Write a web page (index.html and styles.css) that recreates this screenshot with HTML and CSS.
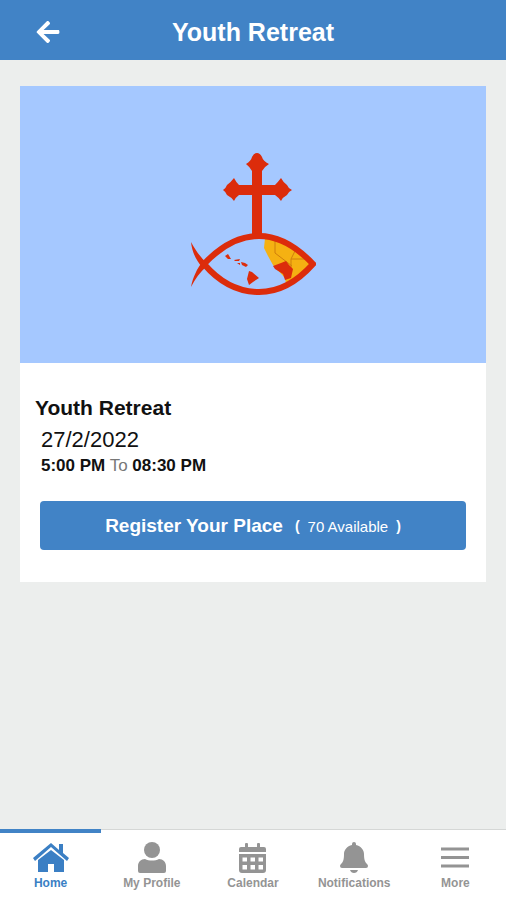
FILE: index.html
```
<!DOCTYPE html>
<html lang="en">
<head>
  <meta charset="UTF-8" />
  <meta name="viewport" content="width=device-width, initial-scale=1" />
  <title>Youth Retreat</title>
  <link rel="stylesheet" href="styles.css">
</head>
<body>
  <header class="topbar">
    <button class="back" type="button" aria-label="Back">
      <svg viewBox="0 0 448 512" width="24" height="26" fill="currentColor">
        <path d="M257.500 445.100l-22.200 22.200c-9.400 9.400-24.600 9.400-33.900 0L7 273c-9.400-9.400-9.400-24.600 0-33.900L201.400 44.700c9.400-9.400 24.600-9.400 33.900 0l22.200 22.200c9.500 9.500 9.300 25-.4 34.300L136.600 216H424c13.300 0 24 10.700 24 24v32c0 13.300-10.700 24-24 24H136.600l120.500 114.800c9.800 9.300 10 24.800.4 34.300z"/>
      </svg>
    </button>
    <h1>Youth Retreat</h1>
  </header>

  <main>
    <article class="card">
      <div class="cover">
        <!-- cross and fish logo -->
        <svg viewBox="190 153 126 144" width="126" height="144">
          <g fill="#f5b112">
            <path d="M265 238C285 241 300 251 312 264C303 274 295 281 286 284L285 278L273 265L268 256L264 248Z"/>
            <path d="M275 240V253L292 266M297 247L291 259V268M291 259H310" fill="none" stroke="#cf7f0c" stroke-width="1"/>
          </g>
          <g fill="#dc2c0b">
            <path d="M273 266L281 263L286 261L289 265L293 269L291 278L285 280L283 274L275 269Z"/>
            <path d="M225 256L228 254L231 259L228 259ZM234 260L240 259L239 261L235 261ZM237 263L240 263L240 265ZM241 262L245 263L248 265L246 267L242 265ZM249 271L252 272L259 278L253 282L249 285L247 279Z"/>
            <path d="M252 235V195H239Q236 197 234 201Q231 197 227 195Q226 192 223 190Q226 188 227 185Q231 182 234 178Q236 182 239 185H252V171Q250 167 246 164Q251 161 252 157Q254 153 257 153Q260 153 262 157Q263 161 269 164Q264 167 262 171V185H275Q278 182 281 178Q283 182 287 185Q288 188 292 190Q288 192 287 195Q283 197 281 201Q278 197 275 195H262V235Z"/>
            <path d="M191 242C196 251 201 258 207 263L202 267C196 260 192 252 191 242ZM191 287C193 277 197 269 202 262L207 266C200 272 195 279 191 287Z"/>
          </g>
          <path d="M204 264C222 245 240 236 259 236C278 236 296 246 313 264C297 282 278 292 259 292C240 292 221 284 204 264Z" fill="none" stroke="#dc2c0b" stroke-width="6"/>
        </svg>
      </div>
      <div class="details">
        <h2>Youth Retreat</h2>
        <p class="date">27/2/2022</p>
        <p class="time"><b>5:00 PM</b> To <b>08:30 PM</b></p>
        <button class="register" type="button">
          <span class="label">Register Your Place</span>
          <span class="places"><b>(</b><span>70 Available</span><b>)</b></span>
        </button>
      </div>
    </article>
  </main>

  <nav class="tabs">
    <a class="tab active" href="#home">
      <svg viewBox="0 0 36 32" width="36" height="32" fill="currentColor">
        <path d="M18 1L26 8V2H30V11L36 16L34 19L18 5L2 19L0 16Z"/>
        <path d="M18 8L31 18V30H21V22H15V30H5V18Z"/>
      </svg>
      Home
    </a>
    <a class="tab" href="#profile">
      <svg viewBox="0 0 36 32" width="36" height="32" fill="currentColor">
        <circle cx="18" cy="8" r="8"/>
        <path d="M11 17C15 19 21 19 25 17C29 17 32 20 32 24V29Q32 31 30 31H6Q4 31 4 29V24C4 20 7 17 11 17Z"/>
      </svg>
      My Profile
    </a>
    <a class="tab" href="#calendar">
      <svg viewBox="0 0 36 32" width="36" height="32" fill="currentColor">
        <path d="M10 2Q10 1 11 1H12Q13 1 13 2V5H22V2Q22 1 23 1H24Q25 1 25 2V5H29Q31 5 31 7V10H4V7Q4 5 6 5H10Z"/>
        <path fill-rule="evenodd" d="M4 12H31V28Q31 31 28 31H7Q4 31 4 28ZM7.500 15.500V19.500H12V15.500ZM15.500 15.500V19.500H20V15.500ZM23.500 15.500V19.500H28V15.500ZM7.500 23V27.500H12V23ZM15.500 23V27.500H20V23ZM23.500 23V27.500H28V23Z"/>
      </svg>
      Calendar
    </a>
    <a class="tab" href="#notifications">
      <svg viewBox="0 0 36 32" width="36" height="32" fill="currentColor">
        <path d="M16 2Q16 0 18 0Q20 0 20 2V3C25 4 28 8 28 12C28 18 29 20 31 22Q32 23 32 24Q32 26 30 26H6Q4 26 4 24Q4 23 5 22C7 20 8 18 8 12C8 8 11 4 16 3Z"/>
        <path d="M14 28H22Q21 31 18 31Q15 31 14 28Z"/>
      </svg>
      Notifications
    </a>
    <a class="tab" href="#more">
      <svg viewBox="0 0 36 32" width="36" height="32" fill="none" stroke="currentColor" stroke-width="3">
        <path d="M4 7H32M4 15.500H32M4 24H32"/>
      </svg>
      More
    </a>
  </nav>
</body>
</html>
```
FILE: styles.css
```
* { box-sizing: border-box; }

body {
  margin: 0;
  min-height: 100vh;
  display: flex;
  flex-direction: column;
  background: #eceeed;
  color: #111;
  font-family: "Liberation Sans", Arial, sans-serif;
}

h1, h2, p { margin: 0; }

button {
  border: none;
  font-family: inherit;
  color: white;
  cursor: pointer;
}

.topbar {
  display: grid;
  grid-template-columns: 60px 1fr 60px;
  align-items: center;
  height: 60px;
  padding-top: 4px;
  background: #4183c6;
  color: white;
}

.topbar h1 {
  font-size: 25px;
  line-height: 28px;
  text-align: center;
}

.back {
  display: flex;
  justify-content: flex-end;
  padding: 0;
  background: transparent;
}

main {
  flex: 1;
  padding: 26px 20px;
}

.card { background: white; }

.cover {
  display: flex;
  align-items: center;
  justify-content: center;
  aspect-ratio: 466 / 277;
  background: #a5c8ff;
}

.details {
  display: flex;
  flex-direction: column;
  padding: 32px 20px;
}

.details h2 {
  margin-left: -5px;
  font-size: 21px;
  line-height: 26px;
}

.date {
  padding: 6px 0 0 1px;
  font-size: 22px;
  line-height: 26px;
}

.time {
  padding-left: 1px;
  font-size: 17px;
  line-height: 26px;
  color: #777;
}

.time b { color: #111; }

.register {
  display: flex;
  align-items: center;
  justify-content: center;
  gap: 12px;
  height: 49px;
  margin-top: 22px;
  border-radius: 4px;
  background: #4183c6;
}

.label {
  font-size: 19px;
  font-weight: bold;
}

.places {
  display: flex;
  gap: 8px;
  padding-top: 2px;
  font-size: 15px;
}

.places b { font-size: 14px; }

.tabs {
  display: flex;
  background: white;
}

.tab {
  flex: 1;
  display: flex;
  flex-direction: column;
  align-items: center;
  gap: 2px;
  height: 71px;
  padding-top: 12px;
  border-top: 1px solid #d5d7d6;
  font-size: 12px;
  font-weight: bold;
  line-height: 14px;
  color: #949494;
  text-decoration: none;
}

.tab.active {
  padding-top: 9px;
  border-top: 4px solid #4183c6;
  color: #3b7fc4;
}
```
